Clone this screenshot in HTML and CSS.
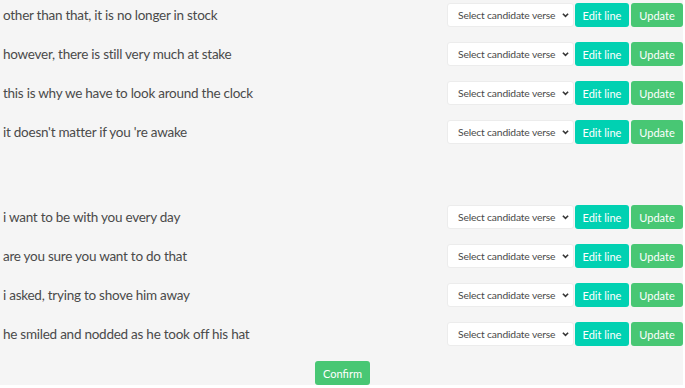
FILE: index.html
```html
<!DOCTYPE html>
<html lang="en">
<head>
    <meta charset="UTF-8">
    <meta name="viewport" content="width=device-width, initial-scale=1.0">
    <title>Poem Editor</title>
    <link rel="stylesheet" href="styles.css">
</head>
<body>
    <div class="page">
        <!-- First stanza -->
        <div class="stanza">
            <div class="line">
                <span class="verse">other than that, it is no longer in stock</span>
                <div class="controls">
                    <div class="select"><span>Select candidate verse</span><svg viewBox="0 0 8 6" class="chevron"><path d="M1 1.5 L4 4.5 L7 1.5"/></svg></div>
                    <button class="btn edit">Edit line</button>
                    <button class="btn update">Update</button>
                </div>
            </div>
            <div class="line">
                <span class="verse">however, there is still very much at stake</span>
                <div class="controls">
                    <div class="select"><span>Select candidate verse</span><svg viewBox="0 0 8 6" class="chevron"><path d="M1 1.5 L4 4.5 L7 1.5"/></svg></div>
                    <button class="btn edit">Edit line</button>
                    <button class="btn update">Update</button>
                </div>
            </div>
            <div class="line">
                <span class="verse">this is why we have to look around the clock</span>
                <div class="controls">
                    <div class="select"><span>Select candidate verse</span><svg viewBox="0 0 8 6" class="chevron"><path d="M1 1.5 L4 4.5 L7 1.5"/></svg></div>
                    <button class="btn edit">Edit line</button>
                    <button class="btn update">Update</button>
                </div>
            </div>
            <div class="line">
                <span class="verse">it doesn't matter if you 're awake</span>
                <div class="controls">
                    <div class="select"><span>Select candidate verse</span><svg viewBox="0 0 8 6" class="chevron"><path d="M1 1.5 L4 4.5 L7 1.5"/></svg></div>
                    <button class="btn edit">Edit line</button>
                    <button class="btn update">Update</button>
                </div>
            </div>
        </div>

        <!-- Second stanza -->
        <div class="stanza">
            <div class="line">
                <span class="verse">i want to be with you every day</span>
                <div class="controls">
                    <div class="select"><span>Select candidate verse</span><svg viewBox="0 0 8 6" class="chevron"><path d="M1 1.5 L4 4.5 L7 1.5"/></svg></div>
                    <button class="btn edit">Edit line</button>
                    <button class="btn update">Update</button>
                </div>
            </div>
            <div class="line">
                <span class="verse">are you sure you want to do that</span>
                <div class="controls">
                    <div class="select"><span>Select candidate verse</span><svg viewBox="0 0 8 6" class="chevron"><path d="M1 1.5 L4 4.5 L7 1.5"/></svg></div>
                    <button class="btn edit">Edit line</button>
                    <button class="btn update">Update</button>
                </div>
            </div>
            <div class="line">
                <span class="verse">i asked, trying to shove him away</span>
                <div class="controls">
                    <div class="select"><span>Select candidate verse</span><svg viewBox="0 0 8 6" class="chevron"><path d="M1 1.5 L4 4.5 L7 1.5"/></svg></div>
                    <button class="btn edit">Edit line</button>
                    <button class="btn update">Update</button>
                </div>
            </div>
            <div class="line">
                <span class="verse">he smiled and nodded as he took off his hat</span>
                <div class="controls">
                    <div class="select"><span>Select candidate verse</span><svg viewBox="0 0 8 6" class="chevron"><path d="M1 1.5 L4 4.5 L7 1.5"/></svg></div>
                    <button class="btn edit">Edit line</button>
                    <button class="btn update">Update</button>
                </div>
            </div>
        </div>

        <div class="footer">
            <button class="btn update confirm">Confirm</button>
        </div>
    </div>
</body>
</html>
```

FILE: styles.css
```css
body {
    margin: 0;
    background: #fff;
    font-family: Lato, "Noto Sans", sans-serif;
}

.page {
    width: 683px;
    height: 385px;
    background: #f5f5f5;
    padding-top: 3px;
    box-sizing: border-box;
}

.stanza + .stanza {
    margin-top: 61px;
}

.line {
    display: flex;
    align-items: center;
    justify-content: space-between;
    height: 24px;
    margin-bottom: 15px;
}

.verse {
    padding-left: 3px;
    padding-bottom: 1px;
    font-size: 13.5px;
    letter-spacing: -0.25px;
    color: #4a4a4a;
    white-space: nowrap;
}

.controls {
    display: flex;
    flex-shrink: 0;
    height: 24px;
}

.select {
    width: 127px;
    height: 24px;
    box-sizing: border-box;
    background: #fff;
    border: 1px solid #ececec;
    border-radius: 3px;
    padding-left: 10px;
    display: flex;
    align-items: center;
    font-size: 10.3px;
    letter-spacing: -0.15px;
    color: #4a4a4a;
    white-space: nowrap;
    margin-right: 1px;
}

.chevron {
    flex-shrink: 0;
    width: 7px;
    height: 6px;
    margin-left: 7px;
    fill: none;
    stroke: #363636;
    stroke-width: 1.8;
}

.btn {
    height: 24px;
    border: none;
    border-radius: 3px;
    color: #fff;
    font-family: inherit;
    font-size: 11px;
    padding: 0;
    cursor: pointer;
}

.edit {
    width: 54px;
    background: #00d1b2;
    margin-right: 2px;
}

.update {
    width: 52px;
    background: #48c774;
}

.footer {
    display: flex;
    justify-content: center;
    padding-left: 2px;
}

.confirm {
    width: 55px;
}
```
